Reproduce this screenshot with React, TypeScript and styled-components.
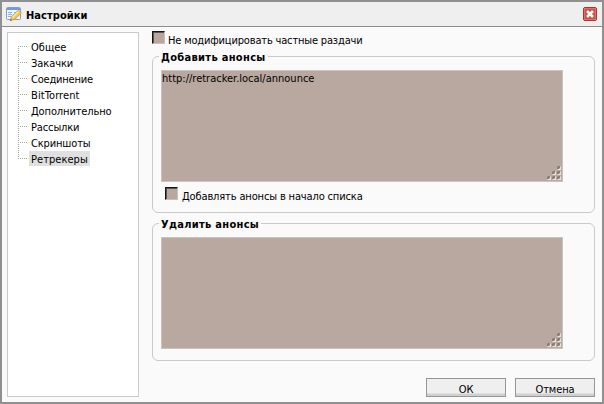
import React from 'react';
import styled, { createGlobalStyle } from 'styled-components';

const GlobalStyle = createGlobalStyle`
  * { box-sizing: border-box; }
  body { margin: 0; overflow: hidden; }
`;

const Window = styled.div`
  width: 604px;
  height: 404px;
  display: flex;
  flex-direction: column;
  border: 2px solid #909090;
  background: #fafafa;
  color: #000;
  font: 11px/16px 'DejaVu Sans Condensed', 'DejaVu Sans', sans-serif;
  font-stretch: condensed;
  white-space: nowrap;
`;

const Header = styled.header`
  height: 25px;
  flex: none;
  display: flex;
  align-items: center;
  padding: 0 5px 0 4px;
  background: #efefef;
  border-bottom: 1px solid #8d8d8d;
`;

const Title = styled.h1`
  flex: 1;
  margin: 3px 0 0 4px;
  font-size: 11px;
  font-weight: bold;
  letter-spacing: 0.05px;
`;

const CloseButton = styled.button`
  width: 14px;
  height: 14px;
  padding: 0;
  border: 0;
  background: none;
  display: flex;
`;

const Body = styled.div`
  flex: 1;
  display: flex;
  padding: 5px 7px 5px 5px;
  gap: 13px;
`;

const Sidebar = styled.nav`
  width: 132px;
  height: 365px;
  background: #fff;
  border: 1px solid #cacaca;
  padding: 6px 0 0 10px;
`;

const Tree = styled.ul`
  list-style: none;
  margin: 0;
  padding: 0;
`;

const TreeRow = styled.li`
  height: 16px;
  display: flex;
`;

const Branch = styled.svg`
  width: 11px;
  height: 16px;
  flex: none;
`;

const TreeLabel = styled.span<{ $selected: boolean; $spacing: number }>`
  height: 15px;
  line-height: 18px;
  padding: 0 2px;
  letter-spacing: ${(p) => p.$spacing}px;
  background: ${(p) => (p.$selected ? '#dfe0df' : 'transparent')};
`;

const Content = styled.main`
  width: 443px;
  display: flex;
  flex-direction: column;
`;

const CheckRow = styled.label<{ $inset?: boolean }>`
  display: flex;
  height: 17px;
  padding-left: ${(p) => (p.$inset ? 4 : 0)}px;
  margin-top: ${(p) => (p.$inset ? 5 : -1)}px;
`;

const Check = styled.span<{ $gap: number }>`
  width: 13px;
  height: 13px;
  margin-right: ${(p) => p.$gap}px;
  background: #b9a89f;
  border: 1px solid #c9c0ba;
  border-top: 1px solid #171413;
  border-left: 1px solid #171413;
  box-shadow: inset 1px 1px 0 #5d534e;
`;

const CheckText = styled.span<{ $spacing: number }>`
  letter-spacing: ${(p) => p.$spacing}px;
  padding-top: 2px;
`;

const Group = styled.fieldset<{ $height: number; $top: number }>`
  min-width: 0;
  height: ${(p) => p.$height}px;
  margin: ${(p) => p.$top}px 0 0;
  padding: 0 8px;
  border: 1px solid #cacaca;
  border-radius: 6px;
`;

const Legend = styled.legend<{ $spacing: number }>`
  height: 14px;
  line-height: 18px;
  margin-left: -2px;
  padding: 0 2px;
  font-weight: bold;
  letter-spacing: ${(p) => p.$spacing}px;
`;

const TextField = styled.div`
  width: 402px;
  height: 112px;
  margin-top: 7px;
  display: flex;
  justify-content: space-between;
  border: 1px solid #cac3be;
  background: #b9a89f;
`;

const FieldText = styled.span`
  height: 16px;
`;

const Grip = styled.svg`
  width: 16px;
  height: 15px;
  align-self: flex-end;
`;

const Actions = styled.footer`
  display: flex;
  justify-content: flex-end;
  gap: 9px;
  margin-top: 17px;
`;

const ActionButton = styled.button`
  width: 80px;
  height: 19px;
  padding: 3px 0 0;
  border: 1px solid #969696;
  background: linear-gradient(#efefef 14px, #d0d0d0 15px);
  color: #000;
  font: inherit;
  line-height: 15px;
  display: flex;
  justify-content: center;
  letter-spacing: -0.1px;
`;

const sections = [
  { name: 'Общее', spacing: 0 },
  { name: 'Закачки', spacing: -0.07 },
  { name: 'Соединение', spacing: -0.2 },
  { name: 'BitTorrent', spacing: 0.1 },
  { name: 'Дополнительно', spacing: -0.12 },
  { name: 'Рассылки', spacing: -0.13 },
  { name: 'Скриншоты', spacing: -0.15 },
  { name: 'Ретрекеры', spacing: 0.05 },
];

const SettingsIcon = () => (
  <svg width="16" height="16" viewBox="0 0 16 16">
    <rect x=".5" y="1.500" width="14" height="12" rx="1" fill="#eef4fc" stroke="#7f9fcb" />
    <rect x="1" y="2" width="13" height="2" fill="#6c9be0" />
    <path d="M2 6.500h4M8 6.500h4M2 8.500h4M2 10.500h3" stroke="#90b2e0" />
    <path d="M4.500 14.500l1-4L12.500 4l3 3-7 6.500z" fill="#f4c552" stroke="#c39a48" strokeWidth=".8" />
    <path d="M6.500 11.500L12.500 5.500" stroke="#ffe9a0" strokeWidth="1.300" />
    <path d="M4 15l.7-2 1.300 1.300z" fill="#6e5137" />
  </svg>
);

const CloseIcon = () => (
  <svg width="14" height="14" viewBox="0 0 14 14">
    <rect x=".5" y=".5" width="13" height="13" rx="1.500" fill="#cf4f42" stroke="#a8382d" />
    <rect x="1.500" y="1.500" width="11" height="11" fill="none" stroke="#dc7468" />
    <path d="M4 4l6 6M10 4l-6 6" stroke="#fff" strokeWidth="2.600" />
  </svg>
);

const gripDots = [[11, 0], [6, 5], [11, 5], [1, 10], [6, 10], [11, 10]];

const ResizeGrip = () => (
  <Grip viewBox="0 0 16 15">
    {gripDots.map(([x, y]) => (
      <g key={`${x}-${y}`}>
        <path d={`M${x + 4} ${y}v4h-4z`} fill="#e9e3df" />
        <path d={`M${x} ${y + 1}l1-1h2v2l-1 1h-2z`} fill="#8b7e76" />
      </g>
    ))}
  </Grip>
);

export default function App() {
  return (
    <>
      <GlobalStyle />
      <Window>
        <Header>
          <SettingsIcon />
          <Title>Настройки</Title>
          <CloseButton aria-label="Закрыть"><CloseIcon /></CloseButton>
        </Header>
        <Body>
          <Sidebar>
            <Tree>
              {sections.map((s, i) => {
                const last = i === sections.length - 1;
                return (
                  <TreeRow key={s.name}>
                    <Branch viewBox="0 0 11 16">
                      <path
                        d={`M.5 ${i === 0 ? 7 : 1}V${last ? 8 : 16}M0 7.5H9`}
                        stroke="#a5a5a0"
                        strokeDasharray="1 1"
                        fill="none"
                      />
                    </Branch>
                    <TreeLabel $selected={last} $spacing={s.spacing}>{s.name}</TreeLabel>
                  </TreeRow>
                );
              })}
            </Tree>
          </Sidebar>
          <Content>
            <CheckRow>
              <Check $gap={3} />
              <CheckText $spacing={-0.165}>Не модифицировать частные раздачи</CheckText>
            </CheckRow>
            <Group $height={164} $top={1}>
              <Legend $spacing={0.32}>Добавить анонсы</Legend>
              <TextField>
                <FieldText>http://retracker.local/announce</FieldText>
                <ResizeGrip />
              </TextField>
              <CheckRow $inset>
                <Check $gap={4} />
                <CheckText $spacing={-0.14}>Добавлять анонсы в начало списка</CheckText>
              </CheckRow>
            </Group>
            <Group $height={145} $top={3}>
              <Legend $spacing={0.3}>Удалить анонсы</Legend>
              <TextField>
                <FieldText />
                <ResizeGrip />
              </TextField>
            </Group>
            <Actions>
              <ActionButton>ОК</ActionButton>
              <ActionButton>Отмена</ActionButton>
            </Actions>
          </Content>
        </Body>
      </Window>
    </>
  );
}
